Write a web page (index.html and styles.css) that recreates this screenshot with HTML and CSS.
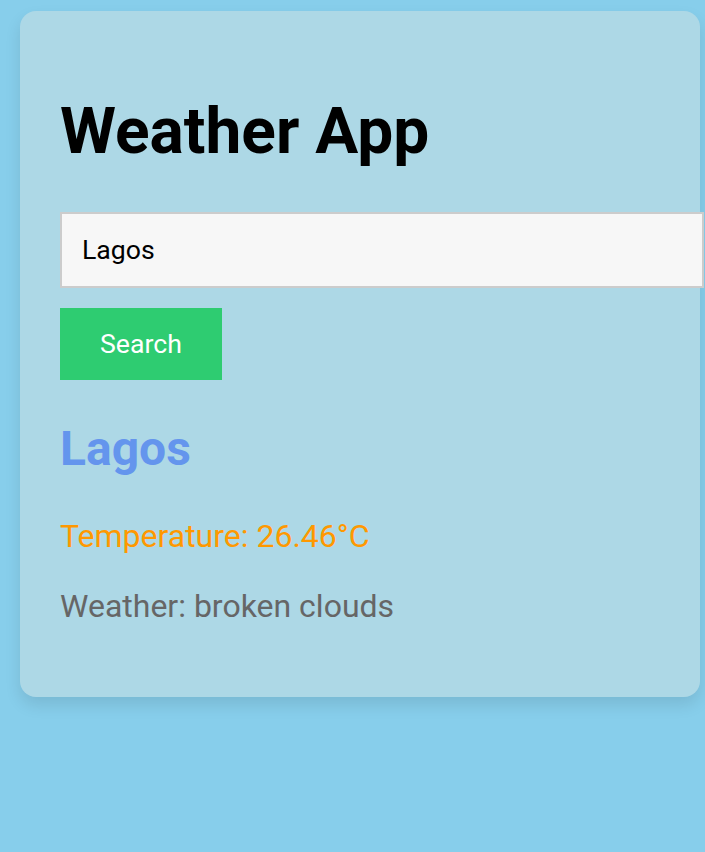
FILE: index.html
```html
<!DOCTYPE html>
<html lang="en">
<head>
<meta charset="UTF-8">
<title>Weather App</title>
<link rel="stylesheet" href="styles.css">
</head>
<body>
  <div class="card">
    <h1 class="title">Weather App</h1>
    <input class="city-input" type="text" value="Lagos">
    <button class="search-btn">Search</button>
    <div class="result">
      <h2 class="city">Lagos</h2>
      <p class="temp">Temperature: 26.46°C</p>
      <p class="desc">Weather: broken clouds</p>
    </div>
  </div>
</body>
</html>
```

FILE: styles.css
```css
html, body {
  margin: 0;
  padding: 0;
}

body {
  background: #87ceeb;
  font-family: Roboto, "Liberation Sans", Arial, sans-serif;
  min-height: 852px;
  padding: 11px 0 0 20px;
  overflow: hidden;
}

.card {
  width: 600px;
  padding: 40px;
  background: #add8e6;
  border-radius: 16px;
  box-shadow: 0 8px 16px rgba(0, 0, 0, 0.1);
}

.title {
  margin: 0 0 43px;
  padding-top: 43px;
  font-size: 64px;
  font-weight: 700;
  line-height: normal;
  color: #000;
}

.city-input {
  display: block;
  width: 600px;
  margin: 0 0 20px;
  padding: 20px;
  border: 2px solid #cccccc;
  background: #f7f7f7;
  font-family: Roboto, "Liberation Sans", Arial, sans-serif;
  font-size: 26.67px;
  line-height: normal;
  color: #000;
  border-radius: 0;
  outline: none;
}

.search-btn {
  display: block;
  padding: 20px 40px;
  border: none;
  background: #2ecc71;
  color: #fff;
  font-family: Roboto, "Liberation Sans", Arial, sans-serif;
  font-size: 26.67px;
  line-height: 32px;
  border-radius: 0;
  cursor: pointer;
}

.city {
  margin: 40px 0 40px;
  font-size: 48px;
  font-weight: 700;
  line-height: normal;
  color: #6495ed;
}

.temp,
.desc {
  margin: 32px 0;
  font-size: 32px;
  line-height: normal;
}

.temp {
  color: #ff9800;
}

.desc {
  color: #666666;
}
```
